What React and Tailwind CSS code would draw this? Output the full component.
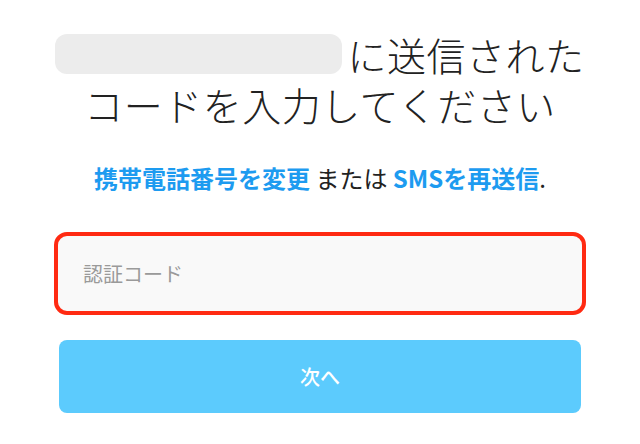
import React, { useState } from 'react';

const font = { fontFamily: '"Noto Sans CJK JP", "Noto Sans", sans-serif' };

export default function App() {
    const [code, setCode] = useState('');

    return (
        <div className="w-[640px] h-[444px] bg-white overflow-hidden" style={font}>
            {/* heading */}
            <div className="pt-[29px] flex flex-col items-center text-[39px] leading-[50px] font-light text-[#222] tracking-[0.5px]">
                <div className="flex items-center">
                    <span className="inline-block w-[287px] h-[40px] rounded-[12px] bg-[#ececec] mr-[5px]" />
                    <span>に送信された</span>
                </div>
                <div>コードを入力してください</div>
            </div>

            <p className="mt-[34px] text-center text-[24px] leading-[30px] text-[#222]">
                <a href="#" className="font-bold text-[#1d9bf0]">携帯電話番号を変更</a>
                <span> または </span>
                <a href="#" className="font-bold text-[#1d9bf0]">SMSを再送信</a>
                <span>.</span>
            </p>

            <div className="mt-[39px] w-[532px] mx-auto">
                <div className="rounded-[13px] border-[4px] border-[#ff2a12] bg-[#f9f9f9] h-[83px] flex items-center px-[25px]">
                    <input
                        value={code}
                        onChange={(e) => setCode(e.target.value)}
                        placeholder="認証コード"
                        className="w-full bg-transparent outline-none text-[20px] text-[#222] placeholder:text-[#9a9a9a]"
                        style={font}
                    />
                </div>

                <button
                    type="button"
                    className="mt-[25px] mx-[5px] w-[522px] h-[73px] rounded-[8px] bg-[#5ccbfd] text-white text-[20px] font-medium"
                    style={font}
                >
                    次へ
                </button>
            </div>
        </div>
    );
}
